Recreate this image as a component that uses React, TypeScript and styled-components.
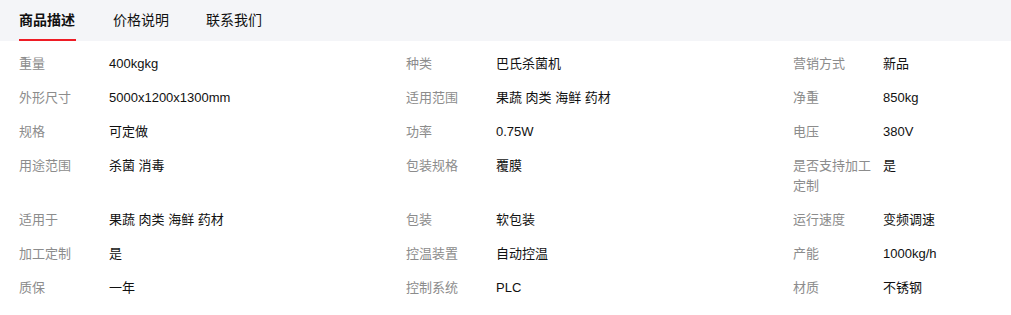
import React from 'react'
import styled, { createGlobalStyle } from 'styled-components'

const GlobalStyle = createGlobalStyle`
  body {
    margin: 0;
    background: #fff;
    font-family: "Liberation Sans", Arial, "Noto Sans CJK SC", sans-serif;
  }
`

const TabBar = styled.div`
  display: flex;
  height: 41px;
  background: #f4f5f8;
  padding-left: 19px;
  gap: 37px;
`

const Tab = styled.div<{ active?: boolean }>`
  display: flex;
  align-items: center;
  height: 100%;
  padding: 0 ${({ active }) => (active ? '1px' : '0')} 2px 0;
  box-sizing: border-box;
  font-size: 14px;
  font-weight: ${({ active }) => (active ? 700 : 400)};
  color: #111;
  cursor: pointer;
  border-bottom: 2px solid ${({ active }) => (active ? '#ee1c25' : 'transparent')};
`

const Specs = styled.div`
  display: grid;
  grid-template-columns: 387px 387px 1fr;
  row-gap: 14px;
  padding: 13px 19px 14px;
`

const Item = styled.div`
  display: flex;
  font-size: 13px;
  line-height: 20px;
`

const Label = styled.div`
  width: 80px;
  margin-right: 10px;
  flex-shrink: 0;
  color: #8c8c8c;
`

const Value = styled.div`
  color: #111;
`

const rows: [string, string][][] = [
  [['重量', '400kgkg'], ['种类', '巴氏杀菌机'], ['营销方式', '新品']],
  [['外形尺寸', '5000x1200x1300mm'], ['适用范围', '果蔬 肉类 海鲜 药材'], ['净重', '850kg']],
  [['规格', '可定做'], ['功率', '0.75W'], ['电压', '380V']],
  [['用途范围', '杀菌 消毒'], ['包装规格', '覆膜'], ['是否支持加工定制', '是']],
  [['适用于', '果蔬 肉类 海鲜 药材'], ['包装', '软包装'], ['运行速度', '变频调速']],
  [['加工定制', '是'], ['控温装置', '自动控温'], ['产能', '1000kg/h']],
  [['质保', '一年'], ['控制系统', 'PLC'], ['材质', '不锈钢']],
]

const App: React.FC = () => {
  return (
    <>
      <GlobalStyle />
      <TabBar>
        <Tab active>商品描述</Tab>
        <Tab>价格说明</Tab>
        <Tab>联系我们</Tab>
      </TabBar>
      <Specs>
        {rows.flat().map(([label, value], i) => (
          <Item key={i}>
            <Label>{label}</Label>
            <Value>{value}</Value>
          </Item>
        ))}
      </Specs>
    </>
  )
}

export default App
